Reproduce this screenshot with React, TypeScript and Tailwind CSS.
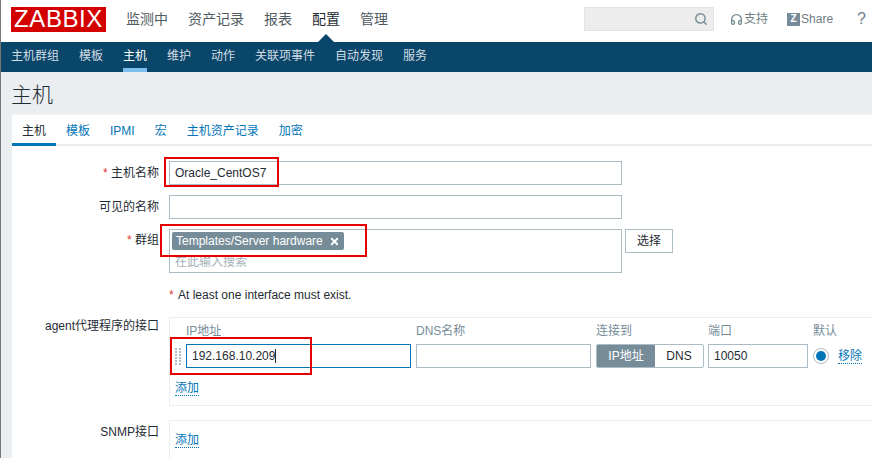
import React from "react";
import { Search, Headphones, X } from "lucide-react";

const font = { fontFamily: '"Liberation Sans", Arial, "Noto Sans CJK SC", sans-serif' };

function Label({ children, req }: { children: React.ReactNode; req?: boolean }) {
  return (
    <div className="w-[147px] shrink-0 text-right text-[12px] leading-[14px] text-[#1f2c33]">
      {req && <span className="text-[#e33734]">* </span>}
      {children}
    </div>
  );
}

function Box({ className = "", children }: { className?: string; children?: React.ReactNode }) {
  return (
    <div className={`flex items-center border border-[#acbbc4] bg-white px-[5px] text-[12px] text-[#1f2c33] ${className}`}>{children}</div>
  );
}

function Red({ className }: { className: string }) {
  return <div className={`pointer-events-none absolute border-[2px] border-[#e60000] ${className}`} />;
}

function Add() {
  return <span className="border-b border-dotted border-[#0275b8] text-[12px] leading-[14px] text-[#0275b8]">添加</span>;
}

export default function App() {
  return (
    <div className="relative h-[458px] w-[872px] overflow-hidden bg-[#ebeef0]" style={font}>
      {/* window edge */}
      <div className="absolute bottom-0 left-0 top-0 w-px bg-[#777777]" />
      {/* top bar */}
      <div className="flex h-[42px] items-center bg-white pb-[4px] pl-[11px]">
        <div className="flex h-[25px] w-[95px] items-center justify-center bg-[#d40000] text-[24px] leading-none tracking-[0.6px] text-white">ZABBIX</div>
        <div className="ml-[20px] flex gap-[20px] text-[14px] text-[#4f5b62]">
          <span>监测中</span>
          <span>资产记录</span>
          <span>报表</span>
          <span className="text-[#1f2c33]">配置</span>
          <span>管理</span>
        </div>
        <div className="ml-auto flex items-center text-[12px] text-[#6f7e87]">
          <div className="flex h-[24px] w-[130px] items-center justify-end border border-[#e3e3e3] bg-[#ededed] pr-[5px]">
            <Search size={14} strokeWidth={2.5} className="text-[#768d99]" />
          </div>
          <Headphones size={13} strokeWidth={2.5} className="ml-[16px] text-[#768d99]" />
          <span className="ml-px">支持</span>
          <span className="ml-[19px] flex h-[13px] w-[13px] items-center justify-center bg-[#768d99] text-[10px] font-bold leading-none text-white">Z</span>
          <span className="ml-px">Share</span>
          <span className="ml-[24px] mr-[6px] text-[16px]">?</span>
        </div>
      </div>
      {/* arrow */}
      <div className="absolute left-[318px] top-[34px] h-0 w-0 border-x-[8px] border-b-[8px] border-x-transparent border-b-[#0a466a]" />
      {/* sub nav */}
      <div className="flex h-[30px] gap-[20px] bg-[#0a466a] pl-[11px] text-[12px] text-[#d3dde3]">
        <span className="leading-[29px]">主机群组</span>
        <span className="leading-[29px]">模板</span>
        <span className="h-[30px] border-b-[4px] border-[#7dc0ee] leading-[29px] text-white">主机</span>
        <span className="leading-[29px]">维护</span>
        <span className="leading-[29px]">动作</span>
        <span className="leading-[29px]">关联项事件</span>
        <span className="leading-[29px]">自动发现</span>
        <span className="leading-[29px]">服务</span>
      </div>
      {/* title */}
      <div className="flex h-[42px] items-center pl-[11px] pt-[4px] text-[21px] font-light text-[#1f2c33]">主机</div>
      {/* card */}
      <div className="ml-[12px] h-[400px] border-t border-[#f4f5f6] bg-white">
        <div className="flex h-[31px] gap-0 border-b-[2px] border-[#ebeef0] text-[12px] text-[#0275b8]">
          <span className="h-[31px] w-[44px] border-b-[3px] border-[#0275b8] pt-[7px] text-center text-[#1f2c33]">主机</span>
          <span className="ml-[10px] pt-[7px]">模板</span>
          <span className="ml-[20px] pt-[7px]">IPMI</span>
          <span className="ml-[20px] pt-[7px]">宏</span>
          <span className="ml-[20px] pt-[7px]">主机资产记录</span>
          <span className="ml-[20px] pt-[7px]">加密</span>
        </div>
        <div className="relative">
          <div className="flex items-center pt-[15px]">
            <Label req>主机名称</Label>
            <Box className="ml-[10px] h-[24px] w-[453px]">Oracle_CentOS7</Box>
          </div>
          <div className="mt-[10px] flex items-center">
            <Label>可见的名称</Label>
            <Box className="ml-[10px] h-[24px] w-[453px]" />
          </div>
          <div className="mt-[10px] flex items-start">
            <div className="pt-[4px]"><Label req>群组</Label></div>
            <div className="ml-[10px] flex h-[44px] w-[453px] flex-col items-start border border-[#acbbc4] bg-white">
              <span className="ml-[2px] mt-[2px] flex h-[18px] items-center gap-[6px] rounded-[2px] bg-[#768d99] pl-[4px] pr-[4px] text-[12px] font-normal text-white">
                Templates/Server hardware
                <X size={11} strokeWidth={4} />
              </span>
              <span className="ml-[5px] mt-[4px] text-[12px] leading-[16px] text-[#a5b1b8]">在此输入搜索</span>
            </div>
            <div className="ml-[3px] flex h-[24px] w-[48px] items-center justify-center border border-[#acbbc4] bg-white text-[12px] text-[#1f2c33]">选择</div>
          </div>
          <div className="ml-[157px] mt-[15px] text-[12px] leading-[14px] text-[#1f2c33]">
            <span className="mr-px text-[#e33734]">* </span>At least one interface must exist.
          </div>
          {/* agent */}
          <div className="mt-[15px] flex items-start">
            <div className="pt-[2px]"><Label>agent代理程序的接口</Label></div>
            <div className="ml-[10px] h-[89px] w-[800px] shrink-0 border border-[#ebeef0] pl-[5px] pt-[6px]">
              <div className="flex text-[12px] leading-[14px] text-[#768d99]">
                <span className="ml-[11px] w-[230px]">IP地址</span>
                <span className="w-[180px]">DNS名称</span>
                <span className="w-[112px]">连接到</span>
                <span className="w-[105px]">端口</span>
                <span>默认</span>
              </div>
              <div className="mt-[6px] flex h-[24px] items-center">
                <span className="grid w-[7px] grid-cols-2 gap-x-[1px] gap-y-[1px]">
                  {Array.from({ length: 12 }).map((_, i) => (
                    <span key={i} className="h-[2px] w-[2px] bg-[#acbbc4]" />
                  ))}
                </span>
                <Box className="ml-[4px] h-[24px] w-[225px] !border-[#0275b8]">
                  <span>192.168.10.209</span>
                  <span className="h-[14px] w-px bg-[#1f2c33]" />
                </Box>
                <Box className="ml-[5px] h-[24px] w-[175px]" />
                <div className="ml-[5px] flex h-[24px] w-[108px] overflow-hidden rounded-[2px] border border-[#acbbc4] text-[12px]">
                  <span className="flex w-[58px] items-center justify-center bg-[#768d99] text-white">IP地址</span>
                  <span className="flex flex-1 items-center justify-center text-[#1f2c33]">DNS</span>
                </div>
                <Box className="ml-[4px] h-[24px] w-[100px]">10050</Box>
                <span className="ml-[5px] flex h-[16px] w-[16px] items-center justify-center rounded-full border border-[#acbbc4] bg-white">
                  <span className="h-[10px] w-[10px] rounded-full bg-[#0275b8]" />
                </span>
                <span className="ml-[9px] border-b border-dotted border-[#0275b8] text-[12px] leading-[14px] text-[#0275b8]">移除</span>
              </div>
              <div className="ml-0 mt-[13px] flex"><Add /></div>
            </div>
          </div>
          {/* snmp */}
          <div className="mt-[14px] flex items-start">
            <div className="pt-[5px]"><Label>SNMP接口</Label></div>
            <div className="ml-[10px] h-[60px] w-[800px] shrink-0 border border-[#ebeef0] pl-[5px] pt-[12px]">
              <div className="flex"><Add /></div>
            </div>
          </div>
          <Red className="left-[152px] top-[11px] h-[30px] w-[115px]" />
          <Red className="left-[148px] top-[78px] h-[33px] w-[207px]" />
          <Red className="left-[158px] top-[191px] h-[38px] w-[142px]" />
        </div>
      </div>
    </div>
  );
}
